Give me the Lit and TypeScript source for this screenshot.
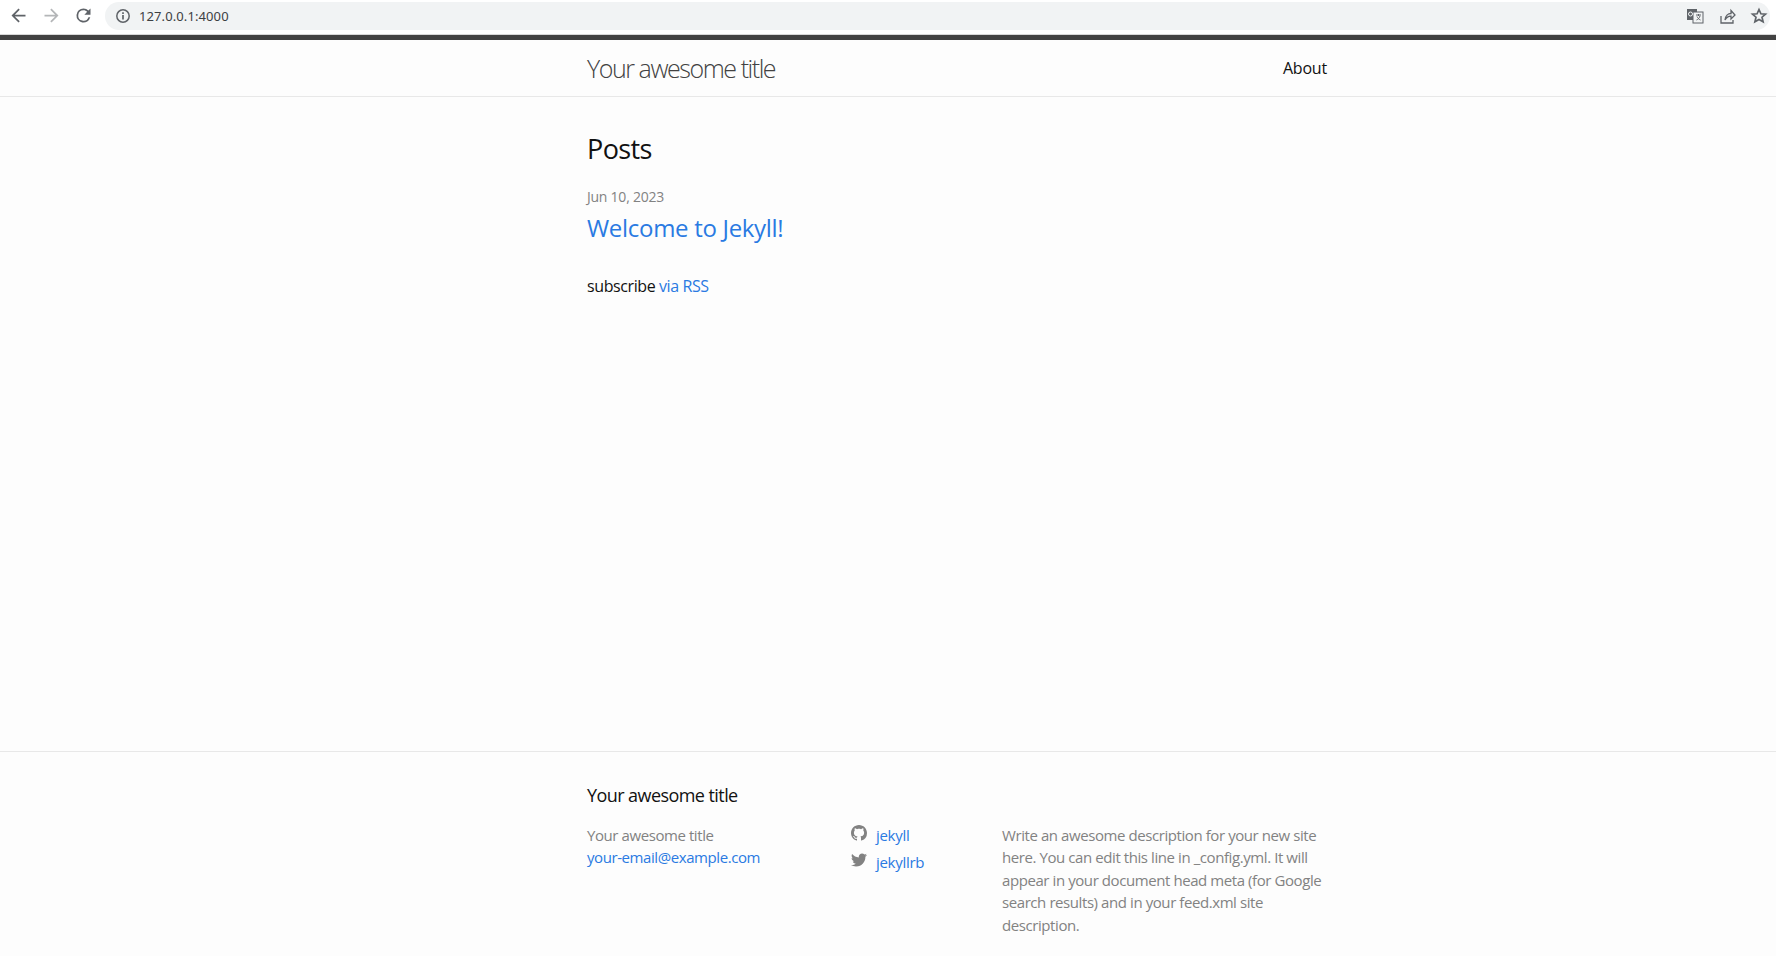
import { LitElement, html, css } from "lit";
import { customElement } from "lit/decorators.js";

@customElement("app-root")
export class AppRoot extends LitElement {
  static styles = css`
    :host { display: block; height: 956px; overflow: hidden; background: #fdfdfd; color: #111;
      font-family: "Open Sans", "Noto Sans", sans-serif; font-size: 16px; line-height: 24px; }
    a { color: #2a7ae2; text-decoration: none; }
    .chrome { height: 35px; box-sizing: border-box; background: #fff; display: flex; align-items: center; padding: 0 6px 3px 0; border-bottom: 1px solid #d8d8d8; }
    .nav { width: 32px; height: 32px; display: flex; align-items: center; justify-content: center; color: #5f6368; flex: none; }
    .nav.off { color: #b4b6b8; }
    .nav svg { width: 21px; height: 21px; fill: currentColor; }
    .nav:first-child { margin-left: 2px; }
    .nav:first-child + .nav { margin-left: 1px; }
    .omni { flex: 1; height: 28px; margin-left: 6px; border-radius: 14px; background: #f1f3f4; display: flex; align-items: center; padding-left: 10px; color: #5f6368; }
    .omni .info { width: 16px; height: 16px; fill: none; stroke: #5f6368; flex: none; }
    .url { margin-left: 8px; font-size: 13px; letter-spacing: 0.1px; color: #3c4043; flex: 1; font-family: "Noto Sans", sans-serif; }
    .tools { display: flex; align-items: center; gap: 14px; padding-right: 2px; }
    .tools svg { width: 18px; height: 18px; display: block; }
    .site-header { border-top: 5px solid #424242; border-bottom: 1px solid #e8e8e8; height: 56px; box-sizing: content-box; }
    .wrap { width: 740px; margin-left: 587px; }
    .head { display: flex; justify-content: space-between; align-items: center; height: 56px; box-sizing: border-box; padding-bottom: 1px; }
    .title { font-size: 25px; font-weight: 300; letter-spacing: -1.45px; color: #424242; line-height: 54px; }
    .about { font-size: 16px; color: #111; letter-spacing: -0.2px; }
    main { height: 654px; box-sizing: border-box; padding-top: 31px; }
    h2 { margin: 0; font-weight: 400; }
    .posts { font-size: 27px; line-height: 42px; margin-bottom: 16px; letter-spacing: -0.6px; }
    .date { font-size: 14px; line-height: 21px; color: #828282; display: block; margin-bottom: 3px; letter-spacing: -0.24px; }
    .post { font-size: 24px; line-height: 36px; display: block; margin-bottom: 28px; letter-spacing: -0.3px; }
    .rss { margin: 0; letter-spacing: -0.4px; }
    footer { border-top: 1px solid #e8e8e8; padding-top: 30px; }
    .ftitle { font-size: 18px; line-height: 27px; margin-bottom: 15px; letter-spacing: -0.57px; }
    .cols { display: grid; grid-template-columns: 264px 151px 325px; font-size: 15px; line-height: 22.4px; color: #828282; letter-spacing: -0.42px; }
    .cols a { display: block; }
    .soc { display: flex; align-items: center; gap: 9px; height: 27px; margin-top: -2px; letter-spacing: -0.3px; }
    .soc + .soc { margin-top: 0; }
    .soc svg { width: 16px; height: 16px; fill: #828282; flex: none; margin-top: -6px; }
  `;

  render() {
    return html`
      <div class="chrome">
        <div class="nav"><svg viewBox="0 0 24 24"><path d="M20 11H7.83l5.59-5.59L12 4l-8 8 8 8 1.41-1.41L7.83 13H20v-2z"/></svg></div>
        <div class="nav off"><svg viewBox="0 0 24 24"><path d="M12 4l-1.41 1.41L16.17 11H4v2h12.17l-5.58 5.59L12 20l8-8z"/></svg></div>
        <div class="nav"><svg viewBox="0 0 24 24"><path d="M17.65 6.35A7.96 7.96 0 0 0 12 4a8 8 0 1 0 7.73 10h-2.08A6 6 0 1 1 12 6c1.66 0 3.14.69 4.22 1.78L13 11h7V4l-2.35 2.35z"/></svg></div>
        <div class="omni">
          <svg class="info" viewBox="0 0 16 16"><circle cx="8" cy="8" r="6.2" stroke-width="1.5"/><path d="M8 7v4.5M8 4.3v1.6" stroke-width="1.7"/></svg>
          <span class="url">127.0.0.1:4000</span>
          <div class="tools">
            <svg viewBox="0 0 18 18"><rect x="1" y="2" width="10" height="11" fill="#5f6368"/><rect x="7" y="5" width="10" height="11" fill="#f1f3f4" stroke="#5f6368"/><path d="M10 8h5M12.5 7v2M14 9c-.5 2-2 3.5-3.5 4M11 9.5c.7 1.5 2 3 3.5 3.5" stroke="#5f6368" fill="none"/><circle cx="4.500" cy="7" r="2" fill="none" stroke="#f1f3f4"/></svg>
            <svg viewBox="0 0 18 18" fill="none" stroke="#5f6368" stroke-width="1.3"><path d="M3 9v7h12v-3"/><path d="M7 13c.3-4 3-6.5 6-6.5V3.5L17 8l-4 4V9.200C10.500 9 8.500 10.500 7 13z"/></svg>
            <svg viewBox="0 0 18 18" fill="none" stroke="#5f6368" stroke-width="1.7"><path d="M9 2.500l1.900 4.300 4.600.4-3.500 3 1.100 4.600L9 12.400l-4.100 2.400L6 10.200l-3.500-3 4.600-.4z"/></svg>
          </div>
        </div>
      </div>
      <header class="site-header">
        <div class="wrap head">
          <a class="title" href="#">Your awesome title</a>
          <a class="about" href="#">About</a>
        </div>
      </header>
      <main>
        <div class="wrap">
          <h2 class="posts">Posts</h2>
          <span class="date">Jun 10, 2023</span>
          <a class="post" href="#">Welcome to Jekyll!</a>
          <p class="rss">subscribe <a href="#">via RSS</a></p>
        </div>
      </main>
      <footer>
        <div class="wrap">
          <h2 class="ftitle">Your awesome title</h2>
          <div class="cols">
            <div><div>Your awesome title</div><a href="#">your-email@example.com</a></div>
            <div>
              <div class="soc"><svg viewBox="0 0 16 16"><path d="M8 0C3.58 0 0 3.58 0 8c0 3.54 2.29 6.53 5.47 7.59.4.07.55-.17.55-.38 0-.19-.01-.82-.01-1.49-2.01.37-2.53-.49-2.69-.94-.09-.23-.48-.94-.82-1.13-.28-.15-.68-.52-.01-.53.63-.01 1.08.58 1.23.82.72 1.21 1.87.87 2.33.66.07-.52.28-.87.51-1.07-1.78-.2-3.64-.89-3.64-3.95 0-.87.31-1.59.82-2.15-.08-.2-.36-1.02.08-2.12 0 0 .67-.21 2.2.82.64-.18 1.32-.27 2-.27.68 0 1.36.09 2 .27 1.53-1.04 2.2-.82 2.2-.82.44 1.1.16 1.92.08 2.12.51.56.82 1.27.82 2.15 0 3.07-1.87 3.75-3.65 3.95.29.25.54.73.54 1.48 0 1.07-.01 1.93-.01 2.2 0 .21.15.46.55.38A8.013 8.013 0 0 0 16 8c0-4.42-3.58-8-8-8z"/></svg><a href="#">jekyll</a></div>
              <div class="soc"><svg viewBox="0 0 24 24"><path d="M23.954 4.569c-.885.389-1.83.654-2.825.775 1.014-.611 1.794-1.574 2.163-2.723-.951.555-2.07.959-3.127 1.184-.896-.959-2.173-1.559-3.591-1.559-2.717 0-4.92 2.203-4.92 4.917 0 .39.045.765.127 1.124C7.691 8.094 4.066 6.13 1.64 3.161c-.427.722-.666 1.561-.666 2.475 0 1.71.87 3.213 2.188 4.096-.807-.026-1.566-.248-2.228-.616v.061c0 2.385 1.693 4.374 3.946 4.827-.413.111-.849.171-1.296.171-.314 0-.615-.03-.916-.086.631 1.953 2.445 3.377 4.604 3.417-1.68 1.319-3.809 2.105-6.102 2.105-.39 0-.779-.023-1.17-.067 2.189 1.394 4.768 2.209 7.557 2.209 9.054 0 13.999-7.496 13.999-13.986 0-.209 0-.42-.015-.63.961-.689 1.8-1.56 2.46-2.548l-.047-.02z"/></svg><a href="#">jekyllrb</a></div>
            </div>
            <div>Write an awesome description for your new site here. You can edit this line in _config.yml. It will appear in your document head meta (for Google search results) and in your feed.xml site description.</div>
          </div>
        </div>
      </footer>
    `;
  }
}
